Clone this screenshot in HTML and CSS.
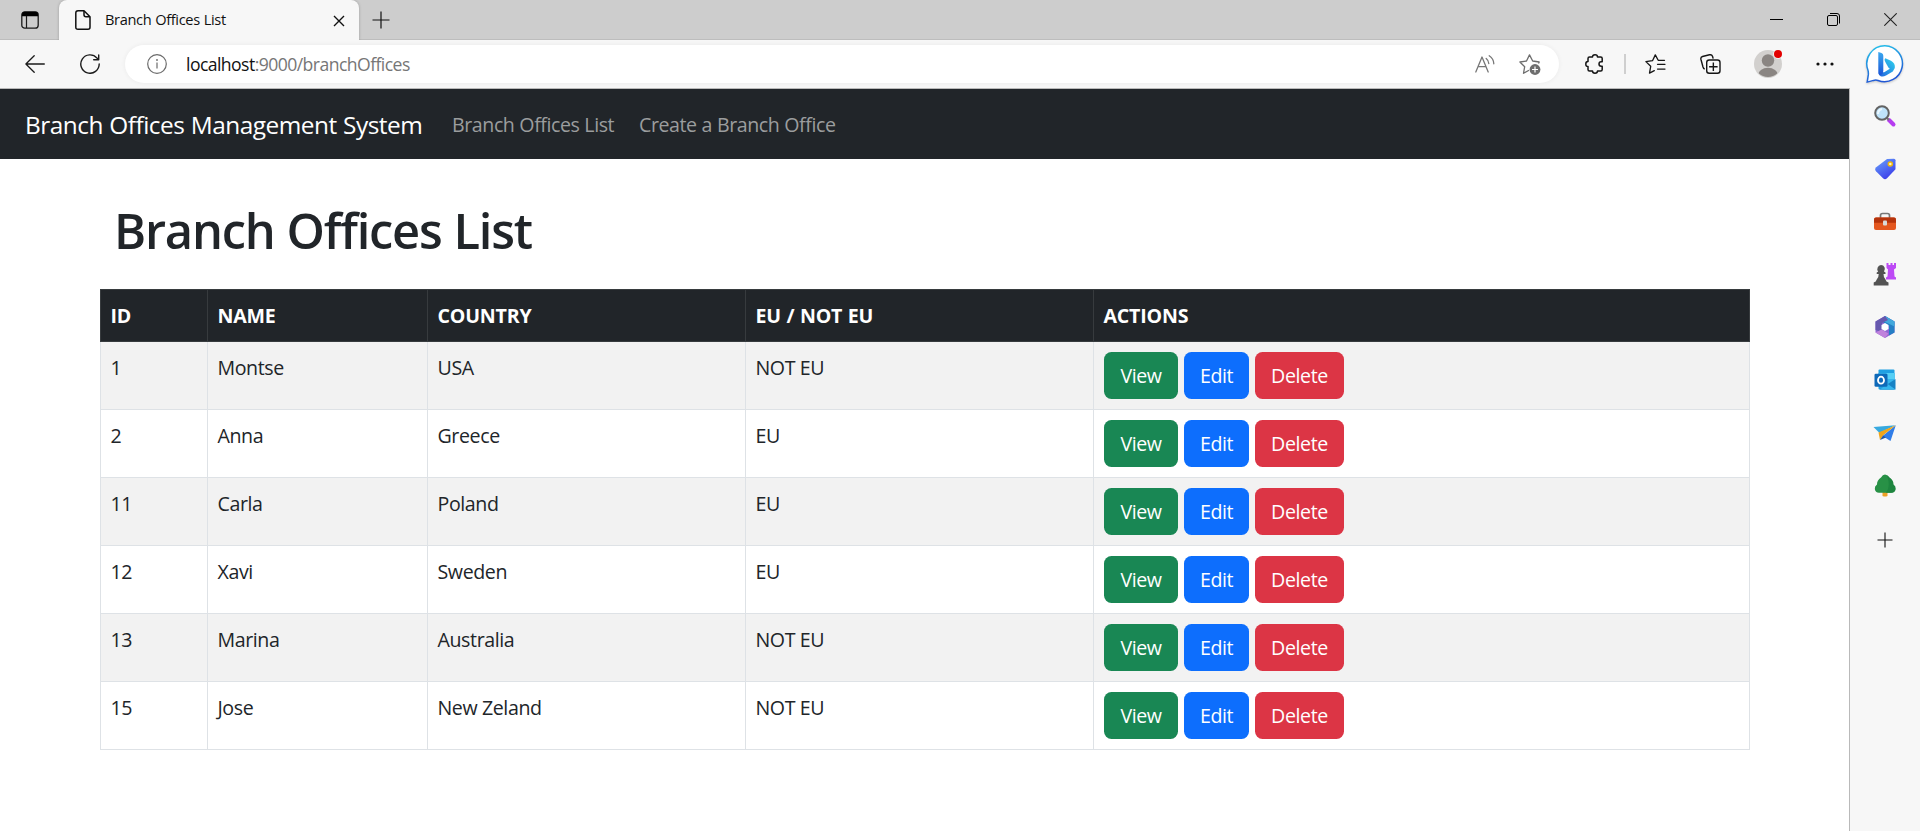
FILE: index.html
```html
<!DOCTYPE html>
<html lang="en">
<head>
<meta charset="utf-8">
<title>Branch Offices List</title>
<link rel="stylesheet" href="styles.css">
</head>
<body>
<div class="window">
  <div class="tabstrip">
    <svg class="workspace-icon" width="18" height="18" viewBox="0 0 18 18"><rect x=".8" y=".8" width="16.4" height="16.4" rx="3" fill="none" stroke="#1b1b1b" stroke-width="1.3"/><path d="M1 5.2V3.5Q1 .8 3.7.8h10.6Q17 .8 17 3.5v1.7z" fill="#000"/><path d="M5.5 5v12" stroke="#1b1b1b" stroke-width="1.2"/></svg>
    <div class="tab">
      <svg class="doc-icon" width="16" height="20" viewBox="0 0 16 20" fill="none" stroke="#111" stroke-width="1.5" stroke-linejoin="round"><path d="M3 .8h6l6 6v10.400q0 2-2 2H3q-2.200 0-2.200-2V3Q.8.8 3 .8z"/><path d="M9 1v3.800q0 2 2 2h4"/></svg>
      <span class="tab-title">Branch Offices List</span>
      <svg class="tab-close" width="12" height="12" viewBox="0 0 12 12" stroke="#111" stroke-width="1.400"><path d="M1 1l10 10M11 1L1 11"/></svg>
    </div>
    <svg class="new-tab" width="18" height="18" viewBox="0 0 18 18" stroke="#111" stroke-width="1.200"><path d="M9 .5v17M.5 9h17"/></svg>
    <div class="controls">
      <svg width="13" height="13" viewBox="0 0 13 13"><path d="M0 6.500h13" stroke="#000"/></svg>
      <svg width="13" height="13" viewBox="0 0 13 13" fill="none" stroke="#000"><rect x=".5" y="2.500" width="10" height="10" rx="1.500"/><path d="M3 .5h7q2.500 0 2.500 2.500v7.500"/></svg>
      <svg width="13" height="13" viewBox="0 0 13 13" stroke="#222" stroke-width="1.100"><path d="M.3.3l12.400 12.400M12.700.3L.3 12.700"/></svg>
    </div>
  </div>

  <div class="toolbar">
    <svg class="back" width="20" height="18" viewBox="0 0 20 18" fill="none" stroke="#1b1b1b" stroke-width="1.300" stroke-linecap="round" stroke-linejoin="round"><path d="M19.300 9H.9M9.200.8L.9 9l8.300 8.200"/></svg>
    <svg class="reload" width="20" height="20" viewBox="0 0 20 20" fill="none" stroke="#1b1b1b" stroke-width="1.400" stroke-linecap="round" stroke-linejoin="round"><path d="M19.200 10A9.200 9.200 0 1 1 17 4.100l1.500 1.600M18.700.9v4.900h-5"/></svg>
    <div class="address">
      <svg width="20" height="20" viewBox="0 0 20 20" fill="none" stroke="#6b6b6b" stroke-width="1.200"><circle cx="10" cy="10" r="9.300"/><path d="M10 8.500v6"/><circle cx="10" cy="6" r=".9" fill="#6b6b6b" stroke="none"/></svg>
      <span class="url"><span class="host">localhost</span>:9000/branchOffices</span>
      <svg class="read-aloud" width="20" height="18" viewBox="0 0 20 18" fill="none" stroke="#777" stroke-width="1.300" stroke-linecap="round" stroke-linejoin="round"><path d="M.8 17L7 2l6.200 15M3 11.700h8M11.200 3.400q2.500 2 2.600 5.100M14.200.8q4.500 3 4.600 8"/></svg>
      <svg class="add-fav" width="22" height="21" viewBox="0 0 22 21" fill="none" stroke="#6e6e6e" stroke-width="1.300" stroke-linejoin="round"><path d="M19.500 9.500l.7-1.500-6.500-1L10.500.9 7.500 7 .9 8l4.800 4.700L4.500 19.300l5.500-3"/><circle cx="16" cy="15.500" r="5.400" fill="#6e6e6e" stroke="none"/><path d="M16 12.500v6M13 15.500h6" stroke="#fff" stroke-width="1.200"/></svg>
    </div>
    <svg class="extensions" width="19" height="20" viewBox="0 0 19 20" fill="none" stroke="#151515" stroke-width="1.500" stroke-linejoin="round"><path d="M4.500 3h3Q7.500.8 10 .8T12.500 3h3.200q1.500 0 1.500 1.500v3.300h-1q-2.200 0-2.200 2.200t2.200 2.200h1v3.300q0 1.500-1.500 1.500h-3.200q0 2.200-2.500 2.200T7.500 17h-3Q3 17 3 15.500v-3Q.8 12.500.8 10T3 7.500v-3Q3 3 4.500 3z"/></svg>
    <span class="divider"></span>
    <svg class="favorites" width="21" height="20" viewBox="0 0 21 20" fill="none" stroke="#151515" stroke-width="1.300" stroke-linejoin="round" stroke-linecap="round"><path d="M19.500 6.300h-6.300L10.300.9 7.500 6.700l-6.600.9 4.800 4.700-1.200 6.800 4.800-2.500M12.500 10.300H20M12.500 15.100H20"/></svg>
    <svg class="collections" width="21" height="20" viewBox="0 0 21 20" fill="none" stroke="#151515" stroke-width="1.400" stroke-linejoin="round"><path d="M4.700 15Q3.500 14.700 3 13L.9 5.200Q.5 3 2.500 2.500L9.500.8q2.200-.5 3 1.500l.7 2.300"/><rect x="6.700" y="6" width="13.300" height="13.300" rx="2.500"/><path d="M13.350 8.500v8.400M9.100 12.700h8.500"/></svg>
    <svg class="avatar" width="30" height="30" viewBox="0 0 30 30"><defs><clipPath id="face"><circle cx="14" cy="15" r="13"/></clipPath></defs><circle cx="14" cy="15" r="14" fill="#d2d0ce"/><g clip-path="url(#face)" fill="#8a8582"><circle cx="14" cy="11.500" r="6.200"/><ellipse cx="14" cy="26" rx="10" ry="7.200"/></g><circle cx="24" cy="5" r="4.800" fill="#f7f7f7"/><circle cx="24" cy="5" r="4" fill="#e30000"/></svg>
    <svg class="more" width="18" height="4" viewBox="0 0 18 4" fill="#111"><circle cx="2" cy="2" r="1.600"/><circle cx="9" cy="2" r="1.600"/><circle cx="16" cy="2" r="1.600"/></svg>
    <svg class="bing" width="40" height="40" viewBox="0 0 40 40"><defs><linearGradient id="rim" x1="0" y1="0" x2="0.300" y2="1"><stop offset="0" stop-color="#25c8ec"/><stop offset="1" stop-color="#2157d5"/></linearGradient><linearGradient id="stem" x1="0" y1="0" x2="0" y2="1"><stop offset="0" stop-color="#3ba8ef"/><stop offset="1" stop-color="#1b55d7"/></linearGradient><linearGradient id="bowl" x1="0" y1="1" x2="1" y2="0"><stop offset="0" stop-color="#2261dd"/><stop offset="1" stop-color="#31d7ee"/></linearGradient></defs><path d="M20 1.700a18 18 0 1 1-7 34.800q-2-.7-4.500-.1l-6.300 1.700 1.100-7.200q.3-2.500-.4-5A18 18 0 0 1 20 1.700z" fill="#fff" stroke="url(#rim)" stroke-width="1.500"/><path d="M20.300 14.300l5.700 2.400q4.500 2.500 3.800 7.300l-2 3.400-6.800 4.200q-3 1.400-5.300.6-2.200-1-2.200-3.500l3.500-1.200q1 1.300 3 .2l4.800-2.900q-1.600-1.200-2.500-3.300-.9-1.200-1.700-2.900-1.800-3.200-.3-4.300z" fill="url(#bowl)"/><path d="M13.300 8l3.200 1.100q1.800.6 1.800 2.600v15.200q-.1 3-2.700 4.100-2.300-.2-2.300-3z" fill="url(#stem)"/></svg>
  </div>

  <div class="body">
    <main class="page">
      <nav class="navbar">
        <a class="brand">Branch Offices Management System</a>
        <a class="nav-link">Branch Offices List</a>
        <a class="nav-link create">Create a Branch Office</a>
      </nav>
      <section class="content">
        <h1>Branch Offices List</h1>
        <table>
          <colgroup><col class="c-id"><col class="c-name"><col class="c-country"><col class="c-eu"><col></colgroup>
          <thead><tr><th>ID</th><th>NAME</th><th>COUNTRY</th><th>EU / NOT EU</th><th>ACTIONS</th></tr></thead>
          <tbody>
            <tr><td>1</td><td>Montse</td><td>USA</td><td>NOT EU</td><td><div class="actions"><a class="btn view">View</a><a class="btn edit">Edit</a><a class="btn delete">Delete</a></div></td></tr>
            <tr><td>2</td><td>Anna</td><td>Greece</td><td>EU</td><td><div class="actions"><a class="btn view">View</a><a class="btn edit">Edit</a><a class="btn delete">Delete</a></div></td></tr>
            <tr><td>11</td><td>Carla</td><td>Poland</td><td>EU</td><td><div class="actions"><a class="btn view">View</a><a class="btn edit">Edit</a><a class="btn delete">Delete</a></div></td></tr>
            <tr><td>12</td><td>Xavi</td><td>Sweden</td><td>EU</td><td><div class="actions"><a class="btn view">View</a><a class="btn edit">Edit</a><a class="btn delete">Delete</a></div></td></tr>
            <tr><td>13</td><td>Marina</td><td>Australia</td><td>NOT EU</td><td><div class="actions"><a class="btn view">View</a><a class="btn edit">Edit</a><a class="btn delete">Delete</a></div></td></tr>
            <tr><td>15</td><td>Jose</td><td>New Zeland</td><td>NOT EU</td><td><div class="actions"><a class="btn view">View</a><a class="btn edit">Edit</a><a class="btn delete">Delete</a></div></td></tr>
          </tbody>
        </table>
      </section>
    </main>

    <aside class="sidebar">
      <svg viewBox="0 0 24 24"><defs><linearGradient id="handle" x1="0" y1="0" x2="1" y2="1"><stop offset="0" stop-color="#c05cf0"/><stop offset="1" stop-color="#a72be8"/></linearGradient></defs><path d="M16 16l4.500 4.500" stroke="#b63df0" stroke-width="4" stroke-linecap="round"/><path d="M13 13l3 3" stroke="#777" stroke-width="2"/><circle cx="9" cy="9" r="6.800" fill="#bfe3fa" stroke="#636363" stroke-width="2"/><path d="M5 10q0-4 4-5" stroke="#eaf7ff" stroke-width="2" fill="none"/></svg>
      <svg viewBox="0 0 24 24"><defs><linearGradient id="tag" x1="0" y1="0" x2=".6" y2="1"><stop offset="0" stop-color="#6aa5fb"/><stop offset="1" stop-color="#3c3eea"/></linearGradient></defs><path d="M14 2l7-.3q1.500 0 1.500 1.500v9L14 21.300q-2 1.700-4 0l-7-7q-1.800-2 .2-4z" fill="url(#tag)"/><circle cx="17.300" cy="7" r="2" fill="#fff7bf" stroke="#efb70d" stroke-width="1.500"/></svg>
      <svg viewBox="0 0 24 24"><path d="M7.500 8V5.500q0-2 2-2h5q2 0 2 2V8" fill="none" stroke="#777" stroke-width="1.700"/><rect x="1" y="7.500" width="22" height="12.500" rx="2" fill="#e4571f"/><path d="M1 12.700V9.500q0-2 2-2h18q2 0 2 2v3.200z" fill="#b4330c"/><rect x="10" y="10.500" width="4" height="5" rx="1" fill="#d9dada"/></svg>
      <svg viewBox="0 0 24 24"><path d="M13.500 1h2v2h2V1h2v2h1.500V1h2v5l-2 1.500.5 7 1.500 1v2h-10v-2l1.500-1 .5-7-1.500-1.500z" fill="#bd4af5"/><path d="M8 3a4 4 0 0 1 3 6.500l1.500 1v1.500h-2q0 4 2 5.500l1 2 2 1v3H.7v-3l2-1 1-2q2-1.500 2-5.500h-2v-1.500l1.500-1A4 4 0 0 1 8 3z" fill="#535353"/></svg>
      <svg viewBox="0 0 24 24"><path d="M12 1l9.500 5.500v11L12 23l-9.500-5.500v-11z" fill="#9067d4"/><path d="M12 1l9.500 5.500v11l-5.500 3V11l-8-5z" fill="#257fc5"/><path d="M12 1l9.500 5.500v5L10 6z" fill="#42a8dc"/><path d="M2.500 6.500L12 1l3 4-6 3v9l-6.500-2z" fill="#6658ae"/><path d="M2.500 17.500l6-3 7 4L12 23z" fill="#c082dc"/><path d="M12 8l3.500 2v4L12 16l-3.500-2v-4z" fill="#fff"/></svg>
      <svg viewBox="0 0 24 24"><rect x="5.500" y="1.500" width="16" height="20" rx="1" fill="#20a0e2"/><path d="M5.500 5h16v8l-8 4-8-4z" fill="#35b5ed"/><path d="M13.500 5h8v6h-8z" fill="#55cff5"/><path d="M22.500 11v10.500h-16z" fill="#1682c5"/><path d="M7 21.500l7-6 8.500 6z" fill="#34b6ee"/><rect x="1.500" y="5.700" width="13" height="13" rx="1.300" fill="#0e69b8"/><ellipse cx="8" cy="12.200" rx="3" ry="3.500" fill="none" stroke="#fff" stroke-width="1.800"/></svg>
      <svg viewBox="0 0 24 24"><path d="M.5 6l22-1.700L6.500 12z" fill="#37a9df"/><path d="M22.800 4.300L17.500 20l-8-5z" fill="#307de8"/><path d="M22.800 4.300L5.500 11.500l1.500 7.500 3.500-5z" fill="#efa51a"/><path d="M7 19l3-4.500 3 2z" fill="#1d57a8"/></svg>
      <svg viewBox="0 0 24 24"><path d="M9.500 17h5v5q-2.500 1-5 0z" fill="#eca126"/><path d="M12 .5q2.300 0 4 3 4.200 3 4 7 2.500 1.500 2.200 4.500-.4 3.700-4.200 3.700H6q-3.800 0-4.200-3.700-.3-3 2.200-4.500-.2-4 4-7 1.700-3 4-3z" fill="#289146"/><path d="M14 1.200q1.500.8 2.500 2.300 4.200 3 4 7 2.500 1.500 2.200 4.500-.4 3.700-4.200 3.700H13q5-6 1-17.500z" fill="#1e853f"/></svg>
      <svg class="add-app" viewBox="0 0 16 16"><path d="M8 .5v15M.5 8h15" stroke="#111" stroke-width="1.100"/></svg>
    </aside>
  </div>
</div>
</body>
</html>
```
FILE: styles.css
```css
* { box-sizing: border-box; }
body { margin: 0; overflow: hidden; background: #f7f7f7; font-family: "Open Sans", "Noto Sans", sans-serif; color: #212529; }
svg { display: block; flex: none; }
.window { display: flex; flex-direction: column; width: 1920px; height: 831px; }

.tabstrip { display: flex; align-items: flex-start; height: 40px; background: #cdcdcd; border-bottom: 1px solid #bdbdbd; }
.workspace-icon { margin: 11px 20px 0 21px; }
.tab { display: flex; align-items: center; width: 300px; height: 40px; padding: 0 14px 7px 16px; background: #f7f7f7; border-radius: 8px 8px 0 0; box-shadow: 0 0 3px rgba(0,0,0,.25); clip-path: inset(0 -4px 0 -4px); }
.doc-icon { margin-top: 7px; }
.tab-title { margin: 5px auto 0 14px; font-size: 14.6px; line-height: 20px; letter-spacing: -.35px; word-spacing: .5px; color: #111; white-space: nowrap; }
.tab-close { margin-top: 8px; }
.new-tab { margin: 11px 0 0 13px; }
.controls { display: flex; gap: 44px; margin: 13px 23px 0 auto; }

.toolbar { display: flex; align-items: center; height: 48px; }
.back { margin-left: 25px; }
.reload { margin-left: 35px; }
.address { display: flex; align-items: center; width: 1434px; height: 38px; margin: 0 0 1px 25px; padding: 1px 18px 0 22px; border-radius: 19px; background: #fff; box-shadow: 0 0 5px rgba(0,0,0,.06); }
.url { margin: 0 auto 1px 19px; font-size: 17.6px; line-height: 26px; letter-spacing: -.56px; color: #767676; white-space: nowrap; }
.host { color: #111; }
.add-fav { margin-left: 24px; }
.extensions { margin-left: 26px; }
.divider { width: 2px; height: 20px; margin: 0 19px 0 20px; background: #cfcfcf; }
.collections { margin-left: 34px; }
.avatar { margin-left: 33px; }
.more { margin-left: 32px; }
.bing { margin: 0 0 0 31px; filter: drop-shadow(0 1px 1px rgba(0,0,0,.2)); }

.body { display: flex; flex: 1; min-height: 0; }
.page { width: 1850px; background: #fff; border-top: 1px solid #b9b9b9; border-right: 1px solid #b9b9b9; }
.navbar { display: flex; align-items: center; height: 70px; padding: 2px 25px 0; background: #212529; white-space: nowrap; }
.brand { width: 427px; font-size: 24.4px; line-height: 38px; letter-spacing: -.5px; word-spacing: .6px; color: #fff; }
.nav-link { width: 187px; font-size: 19.6px; line-height: 30px; letter-spacing: -.42px; word-spacing: .2px; color: #9b9d9e; }
.content { padding: 41px 99px 0 100px; }
h1 { margin: 0; padding: 0 14px; height: 89px; font-size: 48.800px; font-weight: 600; line-height: 61px; letter-spacing: -1.2px; word-spacing: .5px; white-space: nowrap; }
table { width: 1650px; border-collapse: collapse; table-layout: fixed; font-size: 19.6px; line-height: 30px; letter-spacing: -.4px; }
.c-id { width: 107px; }
.c-name { width: 220px; }
.c-country { width: 318px; }
.c-eu { width: 348px; }
th, td { padding: 11px 10px 9px 9.500px; border: 1px solid #dee2e6; text-align: left; vertical-align: top; white-space: nowrap; }
th { height: 52px; background: #212529; border-color: #373b3e; color: #fff; font-weight: 700; letter-spacing: -.2px; word-spacing: .7px; }
td { height: 68px; }
td:last-child { padding: 10px; }
tbody tr:nth-child(odd) { background: #f2f2f2; }
.actions { display: flex; gap: 6px; }
.btn { display: flex; align-items: center; justify-content: center; height: 47px; padding-top: 1px; border-radius: 7.5px; color: #fff; }
.view { width: 74px; background: #198754; }
.edit { width: 65px; background: #0d6efd; }
.delete { width: 89px; background: #dc3545; }

.sidebar { display: flex; flex-direction: column; align-items: center; gap: 28.800px; width: 70px; padding: 16px 1px 0 0; }
.sidebar svg { width: 24px; height: 24px; }
.sidebar .add-app { width: 16px; height: 16px; margin-top: 6px; }
```
